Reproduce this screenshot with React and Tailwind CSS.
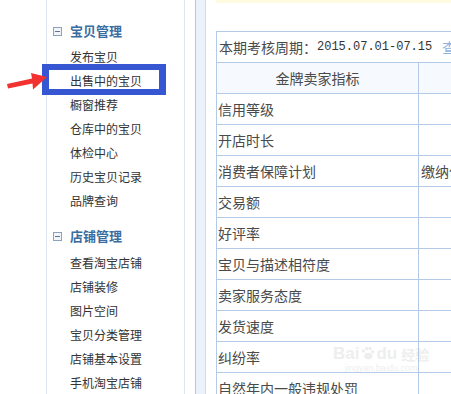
const cn = { fontFamily: '"Noto Sans CJK SC", "Noto Sans", sans-serif' };
const mono = { fontFamily: '"Liberation Mono", "DejaVu Sans Mono", monospace' };

const groups = [
  {
    title: "宝贝管理",
    items: ["发布宝贝", "出售中的宝贝", "橱窗推荐", "仓库中的宝贝", "体检中心", "历史宝贝记录", "品牌查询"],
  },
  {
    title: "店铺管理",
    items: ["查看淘宝店铺", "店铺装修", "图片空间", "宝贝分类管理", "店铺基本设置", "手机淘宝店铺"],
  },
];

const rows = [
  ["信用等级", ""],
  ["开店时长", ""],
  ["消费者保障计划", "缴纳保证金"],
  ["交易额", ""],
  ["好评率", ""],
  ["宝贝与描述相符度", ""],
  ["卖家服务态度", ""],
  ["发货速度", ""],
  ["纠纷率", ""],
  ["自然年内一般违规处罚", ""],
];

function MinusBox() {
  return (
    <span className="flex h-[9px] w-[9px] items-center justify-center border border-[#8da3bb] bg-[#f1f4f8]">
      <span className="h-px w-[5px] bg-[#5d7690]" />
    </span>
  );
}

function SideMenu() {
  return (
    <div className="w-[139px] shrink-0 border-x border-l-[#dce6f2] border-r-[#dde5ef] bg-white pt-[19px]" style={cn}>
      {groups.map((g, gi) => (
        <div key={g.title} className={gi > 0 ? "mt-[11px]" : ""}>
          <div className="flex h-6 items-center pl-[6px]">
            <MinusBox />
            <span className="ml-2 text-[13px] font-bold text-[#3a6d9f]">{g.title}</span>
          </div>
          <ul className={gi > 0 ? "mt-[3px]" : "mt-[2px]"}>
            {g.items.map((it) => (
              <li key={it} className="flex h-6 items-center pl-[23px] text-[12px] text-[#333]">
                {it}
              </li>
            ))}
          </ul>
        </div>
      ))}
    </div>
  );
}

function Table() {
  return (
    <div className="mt-[28px] w-[400px] border-l border-t border-[#b3cbe6] text-[14px] text-[#4a4a4a]" style={cn}>
      <div className="flex h-[31px] items-center border-b border-[#b3cbe6] pl-[2px] whitespace-nowrap">
        <span>本期考核周期：</span>
        <span className="text-[12px] text-[#333]" style={mono}>2015.07.01-07.15</span>
        <span className="ml-[10px] text-[#8fb1df]">查看</span>
      </div>
      <div className="flex h-[31px] border-b border-[#b3cbe6] bg-[#f6f9fd]">
        <div className="flex w-[202px] shrink-0 items-center justify-center border-r border-[#b3cbe6]">金牌卖家指标</div>
        <div className="flex-1" />
      </div>
      {rows.map(([a, b]) => (
        <div key={a} className="flex h-[31px] border-b border-[#b3cbe6]">
          <div className="flex w-[202px] shrink-0 items-center border-r border-[#b3cbe6] pl-[1px]">{a}</div>
          <div className="flex flex-1 items-center whitespace-nowrap pl-[2px]">{b}</div>
        </div>
      ))}
    </div>
  );
}

export default function App() {
  return (
    <div className="relative h-[394px] w-[451px] overflow-hidden bg-white">
      <div className="flex h-full">
        <div className="w-[46px] shrink-0" />
        <SideMenu />
        <div className="w-[10px] shrink-0" />
        <div className="w-[11px] shrink-0 border-x border-l-[#b0c8e6] border-r-[#cddcef] bg-[#ebf2fc]" />
        <div className="min-w-0 flex-1 pl-[10px]">
          <div className="h-[3px] w-[300px] bg-[#fefbe0]" />
          <Table />
        </div>
      </div>

      {/* annotation: highlight box */}
      <div className="absolute left-[42px] top-[64px] h-[31px] w-[124px] border-x-[7px] border-y-[6px] border-[#3656d2]" />

      {/* annotation: red arrow */}
      <svg className="absolute left-[4px] top-[70px]" width="46" height="22" viewBox="0 0 46 22">
        <path d="M3 14 L28 8.5 L27 3 L43 7 L29 19.5 L28.5 13.5 L4 18.5 Z" fill="#f23131" />
      </svg>

      {/* watermark */}
      <div className="pointer-events-none absolute left-[333px] top-[345px] flex flex-col items-center opacity-25">
        <div className="flex items-center text-[17px] font-bold leading-none text-[#bdbdbd]" style={{ fontFamily: '"Liberation Sans", sans-serif' }}>
          <span>Bai</span>
          <svg width="15" height="15" viewBox="0 0 18 18" className="mx-[1px]">
            <circle cx="4" cy="6" r="2" fill="#bdbdbd" />
            <circle cx="8" cy="3" r="2" fill="#bdbdbd" />
            <circle cx="12" cy="3" r="2" fill="#bdbdbd" />
            <circle cx="15" cy="7" r="2" fill="#bdbdbd" />
            <ellipse cx="10" cy="12" rx="5" ry="4" fill="#bdbdbd" />
          </svg>
          <span>du</span>
          <span className="ml-1 text-[14px]" style={cn}>经验</span>
        </div>
        <div className="mt-[2px] text-[9px] leading-none text-[#bdbdbd]" style={{ fontFamily: '"Liberation Sans", sans-serif' }}>jingyan.baidu.com</div>
      </div>
    </div>
  );
}
